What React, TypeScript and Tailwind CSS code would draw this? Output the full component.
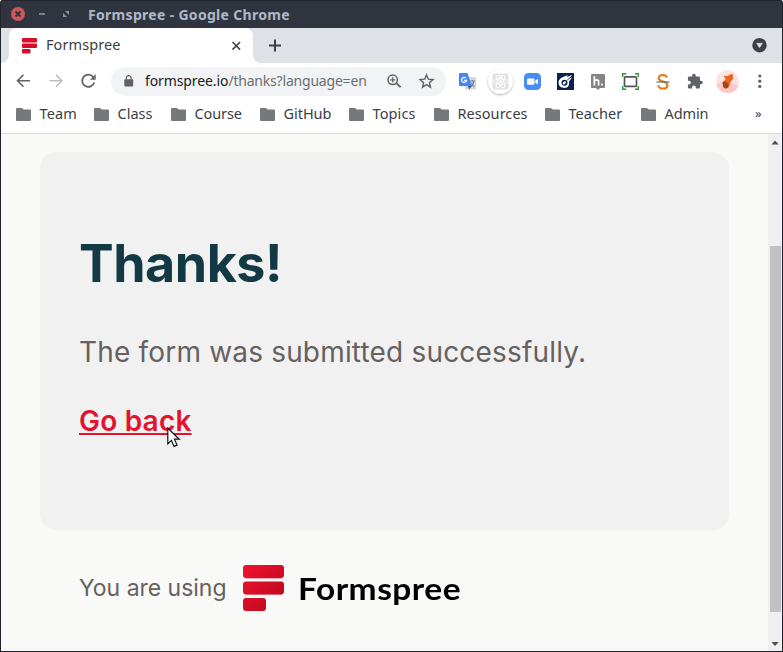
import React from "react";

const ui = "font-['Noto_Sans','Open_Sans',sans-serif]";

function Folder({ className }: { className: string }) {
  return (
    <svg className={`shrink-0 ${className}`} width="15" height="13" viewBox="0 0 15 13" fill="#75797c">
      <path d="M1 0h5l1.6 1.6H14a1 1 0 0 1 1 1V12a1 1 0 0 1-1 1H1a1 1 0 0 1-1-1V1a1 1 0 0 1 1-1z" />
    </svg>
  );
}

const bookmarks = [
  { label: "Team", slot: "w-[78px]", spacing: "tracking-[0.1px]" },
  { label: "Class", slot: "w-[77px]", spacing: "tracking-[0px]" },
  { label: "Course", slot: "w-[89px]", spacing: "tracking-[-0.1px]" },
  { label: "GitHub", slot: "w-[89px]", spacing: "tracking-[-0.05px]" },
  { label: "Topics", slot: "w-[85px]", spacing: "tracking-[0.1px]" },
  { label: "Resources", slot: "w-[111px]", spacing: "tracking-[0.05px]" },
  { label: "Teacher", slot: "w-[96px]", spacing: "tracking-[0.05px]" },
  { label: "Admin", slot: "w-[114px]", spacing: "tracking-[-0.1px]" },
];

function TitleBar() {
  return (
    <div className="flex h-7 shrink-0 items-center bg-[#2f343f] pl-[10px] shadow-[inset_0_1px_0_#22262e]">
      <svg width="60" height="28" viewBox="0 0 60 28" className="shrink-0">
        <circle cx="7" cy="14" r="7" fill="#cc575d" />
        <path d="M4.5 11.5l5 5m0-5l-5 5" stroke="#2f343f" strokeWidth="1.8" />
        <path d="M28 14h6" stroke="#90949e" strokeWidth="1.6" />
        <path d="M54 11h4v4zM52 13v4h4z" fill="#90949e" />
      </svg>
      <span className={`${ui} ml-[17px] whitespace-nowrap pt-[2px] text-[14px] font-bold leading-7 tracking-[0.31px] text-[#afb8c6]`}>
        Formspree - Google Chrome
      </span>
    </div>
  );
}

function TabStrip() {
  return (
    <div className="flex h-[35px] shrink-0 items-stretch bg-[#dee1e6]">
      <div className="flex w-2 items-end bg-white">
        <div className="h-full w-2 rounded-br-lg bg-[#dee1e6]" />
      </div>
      <div className="flex w-[244px] items-center rounded-t-lg bg-white pl-[13px]">
        <svg width="15" height="16" viewBox="0 0 15 16" fill="#d80d2a" className="shrink-0">
          <rect width="15" height="4.5" rx="1" />
          <rect y="5.4" width="15" height="4.6" rx="1" />
          <rect y="11" width="8.5" height="4.5" rx="1" />
        </svg>
        <span className={`${ui} ml-[9px] w-[180px] pb-[3px] text-[14.5px] leading-5 tracking-[0.08px] text-[#3c4043]`}>Formspree</span>
        <svg width="20" height="20" viewBox="0 0 20 20" className="mt-px shrink-0" stroke="#3c4043" strokeWidth="1.5">
          <path d="M6.500 6l7.600 7.600m0-7.600l-7.600 7.600" />
        </svg>
      </div>
      <div className="flex w-2 bg-white">
        <div className="h-full w-2 rounded-bl-lg bg-[#dee1e6]" />
      </div>
      <svg width="30" height="35" viewBox="0 0 30 35" stroke="#3c4043" strokeWidth="2" className="shrink-0">
        <path d="M14 11.5v12M8 17.5h12" />
      </svg>
      <svg width="16" height="35" viewBox="0 0 16 35" className="ml-auto mr-[14px] shrink-0">
        <circle cx="7.5" cy="17.2" r="7.2" fill="#3c4043" />
        <path d="M4.500 15.200h6l-3 4.600z" fill="#dee1e6" stroke="#dee1e6" strokeWidth=".5" />
      </svg>
    </div>
  );
}

function Extensions() {
  return (
    <svg width="336" height="36" viewBox="446 63 336 36" className="shrink-0">
      <defs>
        <filter id="sh" x="-30%" y="-30%" width="160%" height="160%">
          <feDropShadow dx="0" dy="1" stdDeviation="1" floodColor="#000" floodOpacity=".35" />
        </filter>
      </defs>
      <rect x="465" y="77" width="11" height="12.5" rx="1" fill="#d5d7da" />
      <path d="M469.500 81h5.500m-2.500-1v1m1.500 0q-1 4-3 5.500m.5-3.500q1 3 3 3.500" stroke="#6c8791" strokeWidth="1.1" fill="none" />
      <path d="M460 73h7.5l4.3 13H460a1 1 0 0 1-1-1V74a1 1 0 0 1 1-1z" fill="#4586f0" />
      <path d="M467.8 86h4l-2.6 3.5z" fill="#3559b8" />
      <path d="M466 78.200a2.500 2.500 0 1 0 .6 2.200h-2.300" stroke="#fff" strokeWidth="1.2" fill="none" />

      <circle cx="500.5" cy="81.500" r="12.300" fill="#fff" filter="url(#sh)" />
      <rect x="492.500" y="73.500" width="16" height="16" rx="2" fill="#e2e2e2" />
      <g fill="none" stroke="#fff" strokeWidth="1">
        <ellipse cx="500.5" cy="81.5" rx="6.8" ry="2.700" />
        <ellipse cx="500.5" cy="81.5" rx="6.8" ry="2.700" transform="rotate(60 500.5 81.5)" />
        <ellipse cx="500.5" cy="81.5" rx="6.8" ry="2.700" transform="rotate(120 500.5 81.5)" />
      </g>
      <circle cx="500.5" cy="81.5" r="1.2" fill="#fff" />

      <rect x="524" y="73" width="17" height="17" rx="4.5" fill="#468dfa" />
      <rect x="527" y="78.5" width="7.5" height="6.3" rx="1.3" fill="#fff" />
      <path d="M535.2 80.8l2.8-2v5.7l-2.8-2z" fill="#fff" />

      <rect x="557" y="73" width="17" height="17" fill="#08234f" />
      <path d="M558.500 82.500q0-3.500 4.500-5.500l5-2-1.500 2 5.500-2-2.500 3.200 2.500-.7-3 4q1 6-4.500 6.500-6-.3-6-5.500z" fill="#fff" />
      <circle cx="564.500" cy="82.800" r="3" fill="#08234f" />
      <path d="M562.800 84.500q-.5-3.200 3.200-3.200-.2 3.700-3.200 3.200z" fill="#fff" />
      <path d="M567 80.500l3.500-3.500" stroke="#08234f" strokeWidth=".8" />

      <path d="M592 74h12a1 1 0 0 1 1 1v12a1 1 0 0 1-1 1h-4l-2 2-2-2h-4a1 1 0 0 1-1-1V75a1 1 0 0 1 1-1z" fill="#858585" />
      <path d="M594.3 76.2v9.3m0-4q2.5-3 4.3-.5v4.5" stroke="#fff" strokeWidth="1.7" fill="none" />
      <circle cx="602" cy="84.5" r="1" fill="#fff" />

      <path d="M622.7 77v-3.3h3.5M635 73.7h3.3V77M638.3 86v3.3H635M626.2 89.3h-3.5V86" fill="none" stroke="#359236" strokeWidth="1.4" />
      <rect x="624.5" y="76.8" width="12" height="9.5" rx="1" fill="#fff" stroke="#555" strokeWidth="1.7" />

      <path d="M667 77.5q-1-2.5-4.3-2.5-4 .2-4 3.2c0 4.4 8.7 2.1 8.7 6.7 0 5-8.7 4.6-9 .4" fill="none" stroke="#e77819" strokeWidth="2.1" />
      <path d="M656.5 82h13" stroke="#487d7d" strokeWidth="1.2" />

      <svg x="686.5" y="73" width="17" height="17" viewBox="0 0 24 24" fill="#5f6368">
        <path d="M20.5 11H19V7c0-1.1-.9-2-2-2h-4V3.5a2.5 2.5 0 0 0-5 0V5H4c-1.1 0-1.99.9-1.99 2v3.8H3.5c1.49 0 2.7 1.21 2.7 2.7s-1.21 2.7-2.7 2.7H2V20c0 1.1.9 2 2 2h3.8v-1.5c0-1.49 1.21-2.7 2.7-2.7 1.49 0 2.7 1.21 2.7 2.7V22H17c1.1 0 2-.9 2-2v-4h1.5a2.5 2.5 0 0 0 0-5z" />
      </svg>

      <circle cx="727.5" cy="81.5" r="11.5" fill="#fce4e4" />
      <path d="M716.5 85q5-5 10-2l12 2q-3 8-11 8-8-.5-11-8z" fill="#ffc7c9" />
      <path d="M723.500 75.500l3.500.7 5.500-2.700.8 5-2.800 3.500-1.500 5q-3 3.200-6-.5v-4.500l2.500-2.500z" fill="#ef641c" />
      <path d="M722.500 82l3-.8 3 2.800-.5 3.500q-2.500 2-4.800-.5z" fill="#a84410" />

      <g fill="#5f6368"><circle cx="759.8" cy="76" r="1.6" /><circle cx="759.8" cy="81.2" r="1.6" /><circle cx="759.8" cy="86.4" r="1.6" /></g>
    </svg>
  );
}

function Toolbar() {
  return (
    <div className="flex h-9 shrink-0 items-center bg-white">
      <svg width="110" height="36" viewBox="1 63 110 36" className="shrink-0" fill="none" strokeWidth="1.600">
        <path d="M30 80.7H17.8M23.5 74.7l-6 6 6 6" stroke="#5f6368" />
        <path d="M49.5 80.7h12.2M56 74.7l6 6-6 6" stroke="#bdc0c3" />
        <path d="M93.3 77.2a6.1 6.1 0 1 0 .9 5.2" stroke="#5f6368" strokeWidth="1.7" />
        <path d="M95.7 74v5.700h-5.700z" fill="#5f6368" />
      </svg>
      <div className="flex h-[29px] w-[335px] shrink-0 items-center rounded-full bg-[#f1f3f4]">
        <svg width="10" height="12" viewBox="0 0 10 12" className="ml-[13px] shrink-0">
          <rect x=".3" y="4.2" width="8.9" height="7.3" rx="1" fill="#5f6368" />
          <path d="M2.3 5V3a2.4 2.4 0 0 1 4.8 0v2" fill="none" stroke="#5f6368" strokeWidth="1.2" />
        </svg>
        <div className={`${ui} ml-[11px] w-[241px] whitespace-nowrap text-[14px] leading-7 text-[#6b6f73]`}>
          <span className="tracking-[-0.1px] text-[#202124]">formspree.io</span>
          <span className="tracking-[-0.2px]">/thanks?language=en</span>
        </div>
        <svg width="56" height="29" viewBox="386 67 56 29" className="shrink-0" fill="none" stroke="#5f6368">
          <circle cx="392.7" cy="79.8" r="4.7" strokeWidth="1.5" />
          <path d="M396.3 83.2l4.3 4" strokeWidth="1.8" />
          <path d="M390.2 79.8h5M392.7 77.3v5" strokeWidth="1.3" />
          <path d="M426.500 74.900l1.800 4.300 4.700.4-3.600 3 1.100 4.600-4-2.500-4 2.500 1.100-4.600-3.600-3 4.700-.4z" strokeWidth="1.4" />
        </svg>
      </div>
      <Extensions />
    </div>
  );
}

function BookmarkBar() {
  return (
    <div className={`${ui} flex h-[35px] shrink-0 border-b border-[#d9dadc] bg-white pl-[15px] text-[14.5px] leading-7 text-[#3c4043]`}>
      {bookmarks.map((b) => (
        <div key={b.label} className={`flex shrink-0 whitespace-nowrap ${b.slot}`}>
          <Folder className="mt-[9px]" />
          <span className={`ml-[8.500px] ${b.spacing}`}>{b.label}</span>
        </div>
      ))}
      <span className="text-[13px]">»</span>
    </div>
  );
}

function FormspreeMark() {
  return (
    <svg width="42" height="47" viewBox="0 0 42 47" className="shrink-0">
      <defs>
        <linearGradient id="mark" x1="0" y1="0" x2="1" y2="1">
          <stop offset="0" stopColor="#ee142f" />
          <stop offset="1" stopColor="#b9061e" />
        </linearGradient>
      </defs>
      <path d="M3 13h36v1H3zM3 29.3h36v.8H3z" fill="#f4a7b1" />
      <path
        d="M3 0h35a3 3 0 0 1 3 3v7a3 3 0 0 1-3 3H3a3 3 0 0 1-3-3V3a3 3 0 0 1 3-3zM3 16.6h35a3 3 0 0 1 3 3v6.8a3 3 0 0 1-3 3H3a3 3 0 0 1-3-3v-6.800a3 3 0 0 1 3-3zM3 33h17a3 3 0 0 1 3 3v7a3 3 0 0 1-3 3H3a3 3 0 0 1-3-3v-7a3 3 0 0 1 3-3z"
        fill="url(#mark)"
      />
    </svg>
  );
}

function Page() {
  return (
    <div className="flex h-[517px] shrink-0 bg-[#f9f9f7]">
      <main className="w-[767px] pl-[39px] pt-[18px] font-['Inter',sans-serif]">
        <section className="h-[378px] w-[689px] rounded-2xl bg-[#f1f1f1] pl-[39px] pt-20">
          <h1 className="h-16 whitespace-nowrap text-[52px] font-bold leading-[64px] tracking-[-0.5px] text-[#123944]">Thanks!</h1>
          <p className="mt-9 h-10 whitespace-nowrap text-[28px] leading-10 tracking-[0.18px] text-[#666160]">
            The form was submitted successfully.
          </p>
          <div className="relative mt-[29px] h-10 w-fit">
            <a href="#" className="whitespace-nowrap text-[28px] font-semibold leading-10 tracking-[0.2px] text-[#e5122e] underline decoration-2 underline-offset-[2px] [text-decoration-skip-ink:none]">
              Go back
            </a>
            <svg className="absolute left-[88px] top-[26px]" width="14" height="22" viewBox="0 0 14 22">
              <path d="M.8 1v15.800l3.600-3.400 2.700 6 3-1.300-2.700-5.900h4.800z" fill="#fff" stroke="#111" strokeWidth="1.2" />
            </svg>
          </div>
        </section>
        <footer className="mt-[35px] flex h-[47px] items-center pl-[39px]">
          <span className="w-[164px] whitespace-nowrap text-[23px] tracking-[-0.02px] text-[#666160]">You are using</span>
          <FormspreeMark />
          <span className="ml-[13px] origin-left scale-x-[1.08] whitespace-nowrap font-['Lato',sans-serif] text-[31px] font-bold leading-[47px] tracking-[0.45px] text-black">
            Formspree
          </span>
        </footer>
      </main>
      <div className="flex w-[14px] flex-col items-center bg-[#f0f0f0]">
        <svg width="14" height="112" viewBox="0 0 14 112" className="shrink-0">
          <path d="M3.500 10.500L7 6.500l3.800 4z" fill="#505050" />
        </svg>
        <div className="ml-px h-[366px] w-[11px] shrink-0 bg-[#c1c1c1]" />
        <svg width="14" height="39" viewBox="0 0 14 39" className="shrink-0">
          <path d="M3.500 30L7 34l3.800-4z" fill="#505050" />
        </svg>
      </div>
    </div>
  );
}

export default function App() {
  return (
    <div className="flex h-[652px] w-[783px] flex-col overflow-hidden rounded-t-[3px] border-x border-b border-[#22222b] bg-[#22222b]">
      <TitleBar />
      <TabStrip />
      <Toolbar />
      <BookmarkBar />
      <Page />
    </div>
  );
}
